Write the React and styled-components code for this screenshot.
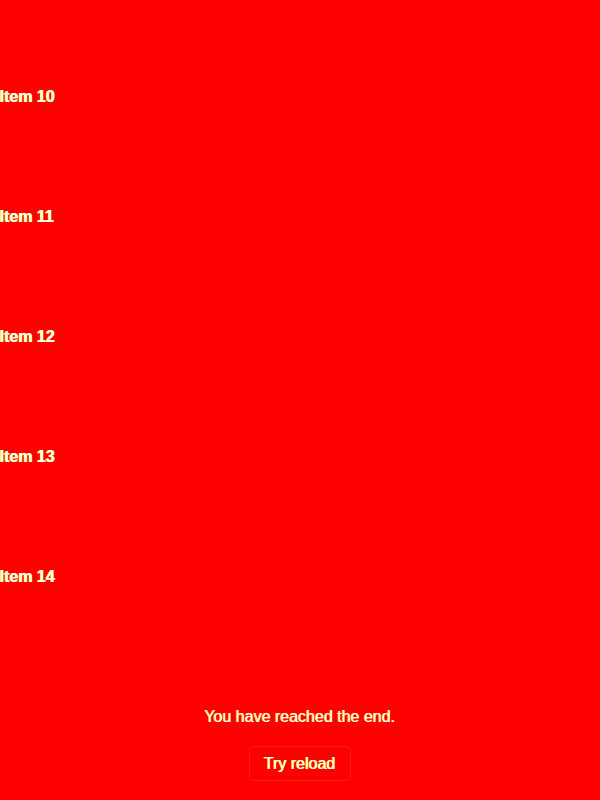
import React from 'react';
import styled, { createGlobalStyle } from 'styled-components';

const GlobalStyle = createGlobalStyle`
  html, body {
    margin: 0;
    padding: 0;
    background: #ff0000;
  }
  body {
    font-family: 'Liberation Sans', Arial, sans-serif;
    color: #ffffff;
  }
`;

const Page = styled.div`
  min-height: 800px;
  background: #ff0000;
  display: flex;
  flex-direction: column;
`;

const List = styled.div`
  display: flex;
  flex-direction: column;
  padding-top: 37px;
`;

const Item = styled.div`
  height: 120px;
  display: flex;
  align-items: center;
  font-size: 16px;
  font-weight: bold;
  text-shadow: -1px 0 0 #ffff00;
`;

const Footer = styled.div`
  display: flex;
  flex-direction: column;
  align-items: center;
  padding-top: 71px;
  gap: 20px;
`;

const EndText = styled.div`
  font-size: 16px;
  line-height: 18px;
  text-shadow: -1px 0 0 rgba(255, 255, 0, 0.8);
`;

const ReloadButton = styled.button`
  font-family: 'Liberation Sans', Arial, sans-serif;
  font-size: 16px;
  font-weight: 500;
  color: #ffffff;
  background: transparent;
  border: 1px solid rgba(255, 255, 0, 0.12);
  border-radius: 5px;
  width: 102px;
  height: 35px;
  padding: 0;
  cursor: pointer;
  text-shadow: -1px 0 0 #ffff00;
`;

const items = [10, 11, 12, 13, 14];

export default function App() {
  return (
    <>
      <GlobalStyle />
      <Page>
        <List>
          {items.map(n => (
            <Item key={n}>Item {n}</Item>
          ))}
        </List>
        <Footer>
          <EndText>You have reached the end.</EndText>
          <ReloadButton>Try reload</ReloadButton>
        </Footer>
      </Page>
    </>
  );
}
